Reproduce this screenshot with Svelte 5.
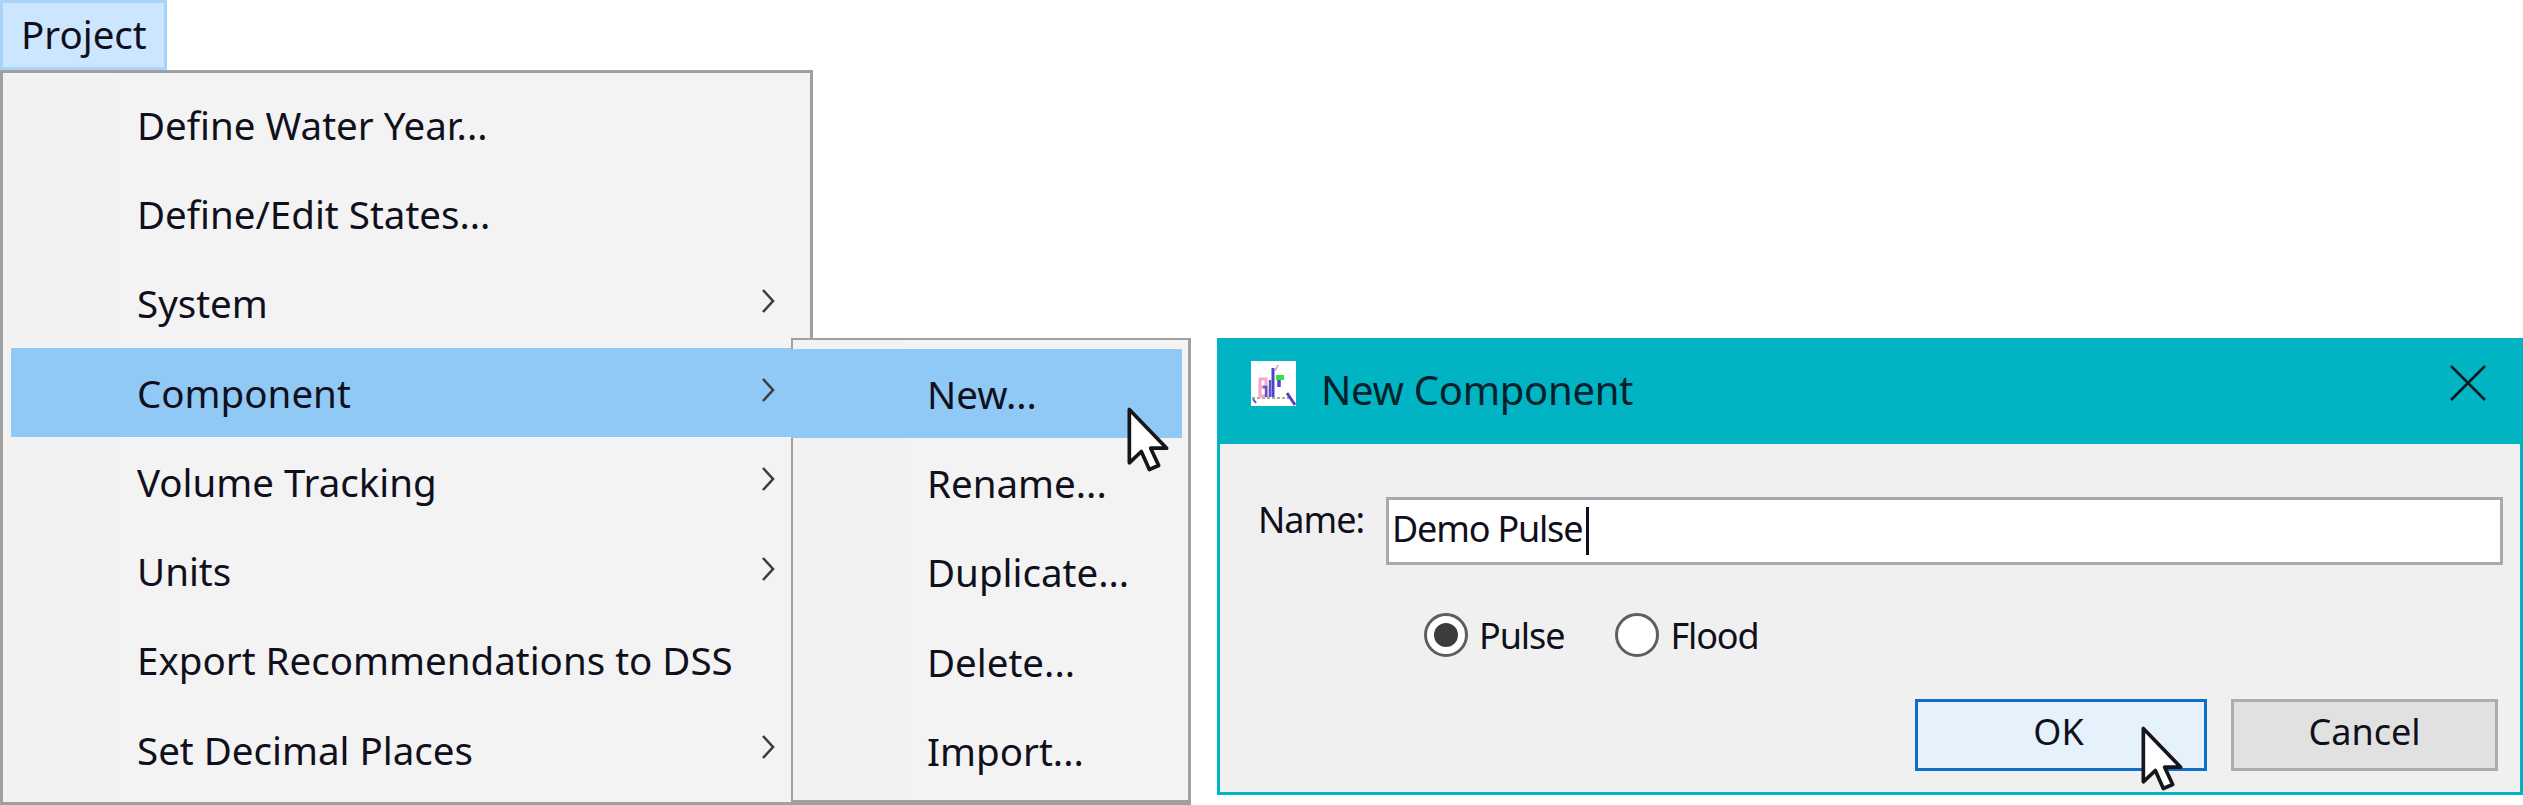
<script lang="ts">
  const items = [
    { label: 'Define Water Year...' },
    { label: 'Define/Edit States...' },
    { label: 'System', sub: true },
    { label: 'Component', sub: true, active: true },
    { label: 'Volume Tracking', sub: true },
    { label: 'Units', sub: true },
    { label: 'Export Recommendations to DSS' },
    { label: 'Set Decimal Places', sub: true }
  ];
  const subItems = ['New...', 'Rename...', 'Duplicate...', 'Delete...', 'Import...'];
  const cursorPath = 'M1 1 V17 L4.6 13.6 L7 19 L9.8 17.8 L7.4 12.6 H12.2 Z';
</script>

<div class="screen">
  <div class="left">
    <div class="menubar"><span class="menubar-item">Project</span></div>
    <div class="menu">
      {#each items as item}
        <div class="row" class:active={item.active}>
          <span>{item.label}</span>
          {#if item.sub}
            <svg class="chev" viewBox="0 0 16 26" aria-hidden="true"><path d="M3 2 L13 13 L3 24" /></svg>
          {/if}
        </div>
      {/each}
    </div>

    <div class="submenu">
      {#each subItems as label, i}
        <div class="subrow" class:active={i === 0}>{label}</div>
      {/each}
      <svg class="cursor menu-cursor" viewBox="0 0 13.2 20" aria-hidden="true"><path d={cursorPath} /></svg>
    </div>
  </div>

  <div class="dialog">
    <div class="titlebar">
      <svg class="appicon" viewBox="0 0 45 45" aria-hidden="true">
        <rect width="45" height="45" fill="#fff" />
        <path d="M1 37 H38" stroke="#a9a6a0" stroke-width="2" stroke-dasharray="3 2" />
        <path d="M9 18 H15 V26 H9 Z M9 26 H16 V35 H9 Z" fill="none" stroke="#f8a6c8" stroke-width="3" />
        <path d="M12 26 H15 V36 M19 19 V36" fill="none" stroke="#5a55cc" stroke-width="2.4" />
        <path d="M22 7 V36" stroke="#4a48c6" stroke-width="3" />
        <path d="M27 4 L24 10" stroke="#e58ae0" stroke-width="1.5" />
        <rect x="25" y="14" width="8" height="5" fill="#35e04a" />
        <path d="M28 19 V26" stroke="#4a48c6" stroke-width="3.5" />
        <path d="M36 32 L44 44" stroke="#4a48c6" stroke-width="3" />
        <path d="M2 38 L5 42" stroke="#5a55cc" stroke-width="2" />
      </svg>
      <span class="title">New Component</span>
      <svg class="close" viewBox="0 0 36 36" aria-hidden="true"><path d="M1 1 L35 35 M35 1 L1 35" /></svg>
    </div>

    <div class="body">
      <div class="name-row">
        <span class="name-label">Name:</span>
        <div class="input"><span>Demo Pulse</span><i class="caret"></i></div>
      </div>

      <div class="radios">
        <div class="radio-item">
          <span class="radio checked"></span><span>Pulse</span>
        </div>
        <div class="radio-item">
          <span class="radio"></span><span>Flood</span>
        </div>
      </div>

      <div class="buttons">
        <div class="btn ok">OK</div>
        <div class="btn cancel">Cancel</div>
      </div>
    </div>
    <svg class="cursor dialog-cursor" viewBox="0 0 13.2 20" aria-hidden="true"><path d={cursorPath} /></svg>
  </div>
</div>

<style>
  :global(body) {
    background: #fff;
  }

  .screen {
    position: relative;
    display: flex;
    width: 2523px;
    height: 805px;
    overflow: hidden;
    font-family: 'Noto Sans', sans-serif;
    font-size: 38.5px;
    color: #10101c;
    background: #fff;
  }

  .left {
    width: 1217px;
    flex: none;
  }

  .menubar {
    height: 70px;
  }

  .menubar-item {
    display: flex;
    align-items: center;
    box-sizing: border-box;
    width: 167px;
    height: 70px;
    padding: 0 0 2px 18px;
    background: #cce6ff;
    border: 3px solid #a9d4f8;
  }

  .menu {
    box-sizing: border-box;
    width: 813px;
    height: 735px;
    padding: 7px 0 0 8px;
    border: 3px solid #a0a0a0;
    background: linear-gradient(90deg, #f2f2f2 115px, #f3f3f3 115px);
  }

  .row {
    display: flex;
    align-items: center;
    justify-content: space-between;
    box-sizing: border-box;
    height: 89.3px;
    padding: 0 34px 0 126px;
  }

  .row.active,
  .subrow.active {
    background: #90c8f6;
  }

  .chev {
    width: 16px;
    height: 26px;
    margin-top: -5px;
    fill: none;
    stroke: #3c3c3c;
    stroke-width: 2.6;
  }

  .submenu {
    position: absolute;
    left: 791px;
    top: 338px;
    box-sizing: border-box;
    width: 400px;
    height: 467px;
    padding: 9px 6px 0 0;
    border: solid #a0a0a0;
    border-width: 2px 3px 5px 2px;
    background: linear-gradient(90deg, #f2f2f2 112px, #f3f3f3 112px);
  }

  .subrow {
    display: flex;
    align-items: center;
    height: 89.3px;
    margin-left: -2px;
    padding-left: 136px;
  }

  .cursor {
    position: absolute;
    width: 44px;
    height: 67px;
    fill: #fff;
    stroke: #16161a;
    stroke-width: 1.1;
    stroke-linejoin: round;
  }

  .menu-cursor {
    left: 333px;
    top: 66px;
  }

  .dialog {
    position: relative;
    display: flex;
    flex-direction: column;
    flex: 1;
    box-sizing: border-box;
    height: 457px;
    margin-top: 338px;
    border: solid #00b4c4;
    border-width: 0 3px 3px;
    background: #f0f0f0;
  }

  .titlebar {
    display: flex;
    align-items: center;
    flex: none;
    height: 106px;
    margin: 0 -3px;
    padding: 0 37px 0 34px;
    background: #00b4c4;
  }

  .appicon {
    width: 45px;
    height: 45px;
    margin: -16px 25px 0 0;
  }

  .title {
    flex: 1;
    margin-top: -3px;
    font-size: 40px;
    letter-spacing: -0.3px;
    color: #04202a;
  }

  .close {
    width: 36px;
    height: 36px;
    margin-top: -16px;
    stroke: #101820;
    stroke-width: 2.6;
  }

  .body {
    display: flex;
    flex-direction: column;
    flex: 1;
    padding: 53px 17px 21px 41px;
  }

  .name-row {
    display: flex;
    align-items: center;
    gap: 22px;
  }

  .name-label {
    margin: -24px 0 0 -3px;
    width: 106px;
    font-size: 36px;
    letter-spacing: -1px;
  }

  .input {
    display: flex;
    align-items: center;
    flex: 1;
    box-sizing: border-box;
    height: 68px;
    padding: 0 0 5px 3px;
    background: #fff;
    border: 3px solid #a8a8b0;
    font-size: 36px;
    letter-spacing: -1.2px;
  }

  .caret {
    width: 3px;
    height: 48px;
    margin: 5px 0 0 4px;
    background: #10101c;
  }

  .radios {
    display: flex;
    gap: 51px;
    margin: 47px 0 0 163px;
    font-size: 36px;
    letter-spacing: -1.1px;
  }

  .radio-item {
    display: flex;
    align-items: center;
    gap: 11px;
    height: 46px;
  }

  .radio {
    display: grid;
    place-items: center;
    box-sizing: border-box;
    width: 44px;
    height: 44px;
    border: 3px solid #5e5e5e;
    border-radius: 50%;
    background: #fff;
  }

  .radio.checked::after {
    content: '';
    width: 24px;
    height: 24px;
    border-radius: 50%;
    background: #3c3c3c;
  }

  .buttons {
    display: flex;
    justify-content: flex-end;
    gap: 24px;
    margin-top: auto;
    padding-right: 5px;
    font-size: 36px;
  }

  .btn {
    display: flex;
    align-items: center;
    justify-content: center;
    box-sizing: border-box;
    height: 72px;
    padding-bottom: 8px;
  }

  .ok {
    width: 292px;
    padding-right: 5px;
    background: #e5f1fb;
    border: 3px solid #0f6fc6;
  }

  .cancel {
    width: 267px;
    background: #e1e1e1;
    border: 3px solid #adadad;
  }

  .dialog-cursor {
    left: 920px;
    top: 387px;
  }
</style>
